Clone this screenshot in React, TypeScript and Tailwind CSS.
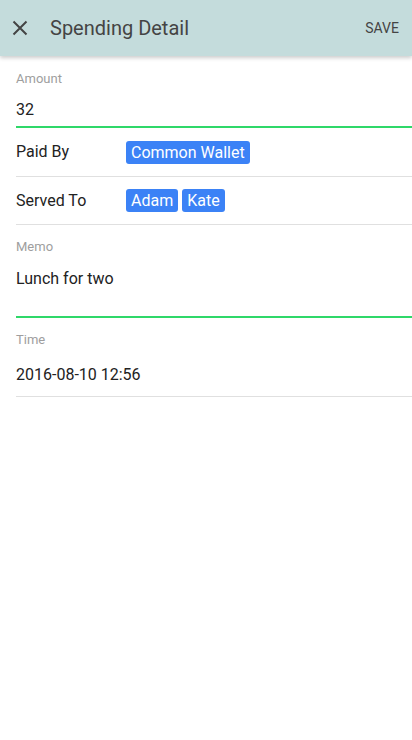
import React from "react";

export default function App() {
  return (
    <div className="w-[412px] h-[740px] bg-white text-[#222]" style={{ fontFamily: "Roboto, 'Liberation Sans', sans-serif" }}>
      <header className="h-[56px] bg-[#c4dcdc] flex items-center shadow-[0_2px_4px_rgba(0,0,0,0.2)] relative z-10">
        <div className="w-[40px] flex justify-center">
          <svg width="16" height="16" viewBox="0 0 16 16">
            <path d="M1.5 1.5L14.5 14.5M14.5 1.5L1.5 14.5" stroke="#444" strokeWidth="2" />
          </svg>
        </div>
        <h1 className="ml-[10px] text-[20px] text-[#444] flex-1">Spending Detail</h1>
        <span className="mr-[13px] text-[14px] text-[#444]">SAVE</span>
      </header>
      <div className="pl-[16px]">
        <div className="pt-[15px]">
          <div className="text-[13px] text-[#9e9e9e] leading-[16px]">Amount</div>
          <div className="text-[16px] leading-[20px] mt-[13px] pb-[6px] border-b-2 border-[#2fd869]">32</div>
        </div>
        <div className="h-[49px] flex items-center border-b border-[#e0e0e0]">
          <span className="w-[110px] text-[16px]">Paid By</span>
          <span className="bg-[#3b82f6] text-white text-[16px] rounded-[3px] px-[5px] h-[23px] leading-[23px]">Common Wallet</span>
        </div>
        <div className="h-[48px] flex items-center border-b border-[#e0e0e0]">
          <span className="w-[110px] text-[16px]">Served To</span>
          <span className="bg-[#3b82f6] text-white text-[16px] rounded-[3px] px-[5px] h-[23px] leading-[23px]">Adam</span>
          <span className="bg-[#3b82f6] text-white text-[16px] rounded-[3px] px-[5px] h-[23px] leading-[23px] ml-[4px]">Kate</span>
        </div>
        <div className="pt-[14px]">
          <div className="text-[13px] text-[#9e9e9e] leading-[16px]">Memo</div>
          <div className="text-[16px] leading-[20px] mt-[14px] h-[49px] border-b-2 border-[#2fd869]">Lunch for two</div>
        </div>
        <div className="pt-[14px]">
          <div className="text-[13px] text-[#9e9e9e] leading-[16px]">Time</div>
          <div className="text-[16px] leading-[20px] mt-[17px] pb-[11px] border-b border-[#e0e0e0]">2016-08-10 12:56</div>
        </div>
      </div>
    </div>
  );
}
